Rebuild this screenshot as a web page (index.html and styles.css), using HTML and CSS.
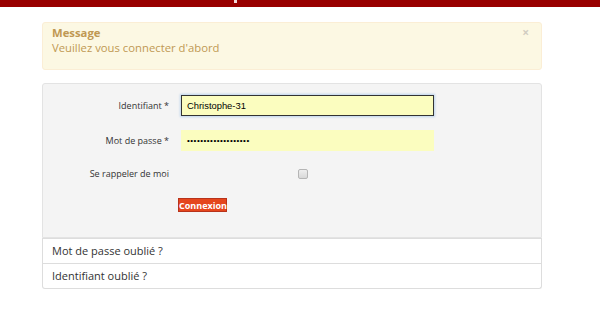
FILE: index.html
```html
<!DOCTYPE html>
<html lang="fr">
<head>
<meta charset="utf-8">
<link rel="stylesheet" href="styles.css">
</head>
<body>
<div class="topbar"><span class="topmark"></span></div>
<div class="container">
  <div class="alert">
    <span class="close">×</span>
    <div class="alert-title">Message</div>
    <div class="alert-text">Veuillez vous connecter d'abord</div>
  </div>
  <div class="panel">
    <div class="row">
      <label class="lbl">Identifiant *</label>
      <div class="field focused">Christophe-31</div>
    </div>
    <div class="row">
      <label class="lbl">Mot de passe *</label>
      <div class="field pw">•••••••••••••••••••</div>
    </div>
    <div class="row">
      <label class="lbl">Se rappeler de moi</label>
      <span class="check"></span>
    </div>
    <div class="row btnrow">
      <span class="lbl"></span>
      <button class="btn">Connexion</button>
    </div>
  </div>
  <ul class="links">
    <li>Mot de passe oublié ?</li>
    <li>Identifiant oublié ?</li>
  </ul>
</div>
</body>
</html>
```
FILE: styles.css
```css
html, body { margin: 0; padding: 0; background: #fff; }
body { font-family: "Open Sans", "DejaVu Sans", sans-serif; color: #333; }
.topbar { height: 7px; background: #990000; position: relative; }
.topmark { position: absolute; left: 234px; top: 0; width: 3px; height: 3px; background: #f3d9d9; }
.container { width: 500px; margin-left: 42px; padding-top: 15px; }
.alert {
  position: relative;
  background: #fcf8e3;
  border: 1px solid #fbeed5;
  border-radius: 3px;
  color: #c09853;
  padding: 2px 10px 0 9px;
  height: 44px;
  box-sizing: content-box;
}
.alert-title { font-weight: 700; font-size: 11.3px; line-height: 15px; }
.alert-text { font-size: 11.3px; line-height: 16px; }
.close { position: absolute; right: 12px; top: 1px; color: #d2cdc2; font-size: 12px; font-weight: 700; }
.panel {
  margin-top: 13px;
  background: #f4f4f4;
  border: 1px solid #e3e3e3;
  border-radius: 3px 3px 0 0;
  padding: 11px 0 25px 0;
}
.row { display: flex; align-items: center; height: 21px; gap: 12px; margin-bottom: 14px; }
.row:nth-child(2) { margin-bottom: 12px; }
.lbl { width: 126px; text-align: right; font-size: 9px; color: #333; flex: none; }
.field {
  width: 253px; height: 21px; box-sizing: border-box;
  background: #fbfdbf;
  font-family: "Liberation Sans", Arial, sans-serif; font-size: 9.4px; color: #000;
  padding-left: 6px; display: flex; align-items: center;
}
.field.focused { border: 1px solid #333; box-shadow: 0 0 2px 1px #bcd3ec; padding-left: 5px; }
.field.pw { font-size: 8px; letter-spacing: 0.5px; }
.check {
  margin-left: 117px; width: 8px; height: 8px; border: 1px solid #b5b5b5; border-radius: 2px;
  background: linear-gradient(#eee, #d8d8d8);
}
.btnrow { height: 14px; margin-bottom: 0; }
.btn {
  margin-left: -3px; height: 14px; width: 49px; padding: 0; box-sizing: border-box;
  background: #e5461c; border: 1px solid #b8321a; color: #fff;
  font-family: "Open Sans", sans-serif; font-weight: 700; font-size: 9px; line-height: 11px;
}
.links { list-style: none; margin: 0; padding: 0; }
.links li {
  height: 24px; border: 1px solid #ddd; border-top: none; background: #fff;
  font-size: 11px; line-height: 24px; padding-left: 9px; color: #333;
}
.links li:first-child { border-top: 1px solid #ddd; }
.links li:last-child { border-radius: 0 0 3px 3px; }
```
